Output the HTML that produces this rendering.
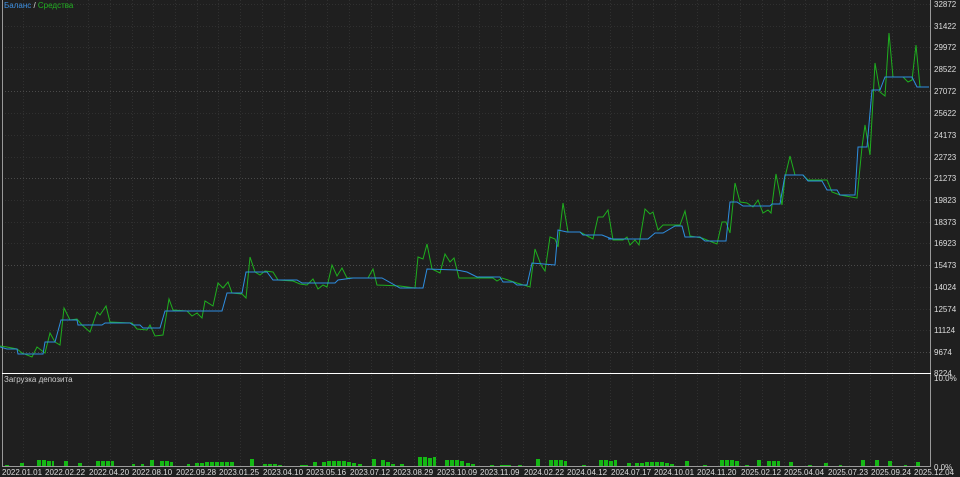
<!DOCTYPE html>
<html><head><meta charset="utf-8"><style>
html,body{margin:0;padding:0;background:#1f1f1f;}
svg{display:block}
text{font-family:"Liberation Sans",sans-serif;font-size:8px;}
</style></head><body>
<svg width="960" height="477" viewBox="0 0 960 477" xmlns="http://www.w3.org/2000/svg">
<rect width="960" height="477" fill="#1f1f1f"/>
<g stroke="#303030" stroke-width="1" stroke-dasharray="1,2">
<path d="M23.5 0V466M67.5 0V466M88.5 0V466M110.5 0V466M132.5 0V466M153.5 0V466M175.5 0V466M197.5 0V466M218.5 0V466M240.5 0V466M262.5 0V466M284.5 0V466M305.5 0V466M327.5 0V466M349.5 0V466M371.5 0V466M392.5 0V466M414.5 0V466M436.5 0V466M458.5 0V466M479.5 0V466M501.5 0V466M523.5 0V466M545.5 0V466M566.5 0V466M588.5 0V466M610.5 0V466M632.5 0V466M653.5 0V466M675.5 0V466M697.5 0V466M718.5 0V466M740.5 0V466M762.5 0V466M784.5 0V466M805.5 0V466M827.5 0V466M849.5 0V466M870.5 0V466M892.5 0V466M914.5 0V466"/>
<path d="M2 4.5H930M2 26.5H930M2 47.5H930M2 69.5H930M2 91.5H930M2 113.5H930M2 135.5H930M2 157.5H930M2 178.5H930M2 200.5H930M2 222.5H930M2 243.5H930M2 265.5H930M2 287.5H930M2 309.5H930M2 330.5H930M2 352.5H930"/>
</g>
<g stroke="#4a4a4a" stroke-width="1" stroke-dasharray="1,2">
<path d="M2 91.5H930M2 178.5H930M2 265.5H930M2 352.5H930"/>
</g>
<line x1="2.5" y1="0" x2="2.5" y2="466" stroke="#999"/>
<line x1="930.5" y1="0" x2="930.5" y2="466" stroke="#999"/>
<line x1="2" y1="466.5" x2="931" y2="466.5" stroke="#999"/>
<line x1="2" y1="373.5" x2="931" y2="373.5" stroke="#fff"/>
<polyline fill="none" stroke="#1fae1f" stroke-width="1" points="0,346 7,347 17,349 22,353 32,357 37,347 45,353 50,333 55,342 60,345 64,308 70,320 77,319 82,325 90,332 97,312 100,315 106,306 110,322 132,323 137,329 147,330 150,325 155,336 163,335 169,299 173,310 187,311 192,316 197,313 202,318 205,301 213,306 218,283 223,288 228,282 232,293 242,294 246,298 250,257 255,272 260,275 265,271 273,272 278,280 293,281 300,284 307,285 313,279 318,289 323,285 327,287 332,265 337,276 342,268 347,278 368,278 373,269 377,285 400,286 415,288 418,257 423,259 427,244 432,269 440,273 445,254 450,262 454,258 459,278 493,278 497,281 502,278 517,283 530,287 535,249 541,265 545,271 550,237 555,239 558,247 563,203 568,232 580,232 593,239 598,217 603,217 608,210 613,240 623,240 627,237 630,245 635,240 639,245 645,209 650,214 653,212 658,230 663,225 680,225 685,211 690,236 702,238 712,242 717,244 722,222 726,222 730,233 735,183 740,202 747,203 753,207 758,200 763,213 768,210 771,213 776,174 782,205 785,177 790,156 795,175 803,175 808,180 827,180 832,192 840,195 857,198 862,147 865,125 870,155 875,63 880,92 885,96 889,33 893,77 903,77 908,82 912,80 916,45 920,87 929,87"/>
<polyline fill="none" stroke="#2e8ee0" stroke-width="1" points="0,347 7,349 17,349 18,354 43,354 45,342 55,342 61,320 77,320 78,325 102,325 105,323 130,323 133,325 140,325 143,328 160,328 165,311 222,311 227,293 242,293 246,272 267,272 273,280 297,280 302,283 335,283 338,280 353,278 382,278 400,288 423,288 427,269 457,270 467,272 477,277 500,277 503,282 513,282 517,285 527,285 532,263 555,265 558,230 567,232 580,232 583,235 602,235 612,239 608,239 648,239 655,233 663,233 675,226 682,226 685,237 700,237 705,241 726,241 730,202 737,202 743,206 770,206 772,204 780,204 785,175 803,175 808,181 822,181 827,190 837,190 840,195 855,195 858,147 867,147 872,90 880,90 885,77 912,77 917,87 929,87"/>
<g fill="#14b814">
<rect x="5" y="465" width="4" height="1"/><rect x="20" y="463" width="4" height="3"/>
<rect x="37" y="460" width="4" height="6"/><rect x="42" y="460" width="4" height="6"/><rect x="47" y="461" width="4" height="5"/><rect x="52" y="461" width="2" height="5"/>
<rect x="64" y="461" width="4" height="5"/><rect x="78" y="463" width="4" height="3"/>
<rect x="96" y="461" width="4" height="5"/><rect x="101" y="461" width="4" height="5"/><rect x="106" y="461" width="4" height="5"/><rect x="111" y="461" width="3" height="5"/>
<rect x="132" y="464" width="3" height="2"/><rect x="141" y="464" width="3" height="2"/>
<rect x="150" y="460" width="4" height="6"/><rect x="160" y="461" width="4" height="5"/><rect x="165" y="461" width="4" height="5"/><rect x="170" y="462" width="3" height="4"/>
<rect x="187" y="464" width="3" height="2"/><rect x="195" y="463" width="4" height="3"/><rect x="200" y="463" width="4" height="3"/><rect x="205" y="462" width="4" height="4"/><rect x="210" y="462" width="4" height="4"/><rect x="215" y="462" width="4" height="4"/><rect x="220" y="462" width="4" height="4"/><rect x="225" y="462" width="4" height="4"/><rect x="230" y="462" width="4" height="4"/>
<rect x="250" y="459" width="4" height="7"/><rect x="263" y="464" width="4" height="2"/><rect x="268" y="464" width="4" height="2"/><rect x="273" y="464" width="4" height="2"/><rect x="278" y="465" width="4" height="1"/>
<rect x="300" y="465" width="8" height="1"/><rect x="313" y="462" width="4" height="4"/><rect x="322" y="462" width="4" height="4"/><rect x="327" y="461" width="4" height="5"/><rect x="332" y="461" width="4" height="5"/><rect x="337" y="461" width="4" height="5"/><rect x="342" y="461" width="4" height="5"/><rect x="347" y="462" width="4" height="4"/><rect x="352" y="463" width="4" height="3"/><rect x="358" y="464" width="4" height="2"/>
<rect x="372" y="459" width="4" height="7"/><rect x="381" y="460" width="4" height="6"/><rect x="386" y="462" width="4" height="4"/><rect x="391" y="464" width="4" height="2"/><rect x="400" y="464" width="4" height="2"/>
<rect x="418" y="457" width="4" height="9"/><rect x="423" y="457" width="4" height="9"/><rect x="428" y="458" width="4" height="8"/><rect x="433" y="457" width="3" height="9"/>
<rect x="445" y="460" width="4" height="6"/><rect x="450" y="460" width="4" height="6"/><rect x="455" y="460" width="4" height="6"/><rect x="460" y="461" width="4" height="5"/><rect x="466" y="463" width="4" height="3"/><rect x="471" y="464" width="4" height="2"/>
<rect x="490" y="465" width="4" height="1"/><rect x="500" y="465" width="11" height="1"/><rect x="518" y="465" width="4" height="1"/>
<rect x="536" y="459" width="4" height="7"/><rect x="549" y="460" width="4" height="6"/><rect x="554" y="460" width="4" height="6"/><rect x="559" y="460" width="4" height="6"/><rect x="564" y="461" width="3" height="5"/><rect x="582" y="465" width="4" height="1"/>
<rect x="599" y="460" width="4" height="6"/><rect x="604" y="460" width="4" height="6"/><rect x="609" y="461" width="4" height="5"/><rect x="614" y="460" width="3" height="6"/>
<rect x="627" y="463" width="4" height="3"/><rect x="635" y="463" width="4" height="3"/><rect x="640" y="463" width="4" height="3"/><rect x="645" y="462" width="4" height="4"/><rect x="650" y="462" width="4" height="4"/><rect x="655" y="462" width="4" height="4"/><rect x="660" y="462" width="4" height="4"/><rect x="665" y="463" width="4" height="3"/><rect x="670" y="464" width="4" height="2"/>
<rect x="685" y="461" width="4" height="5"/><rect x="703" y="465" width="4" height="1"/>
<rect x="720" y="460" width="4" height="6"/><rect x="725" y="460" width="4" height="6"/><rect x="730" y="460" width="4" height="6"/><rect x="735" y="461" width="4" height="5"/><rect x="745" y="465" width="4" height="1"/>
<rect x="757" y="460" width="4" height="6"/><rect x="767" y="461" width="4" height="5"/><rect x="772" y="461" width="4" height="5"/><rect x="777" y="461" width="3" height="5"/><rect x="789" y="462" width="4" height="4"/>
<rect x="808" y="465" width="4" height="1"/><rect x="824" y="463" width="4" height="3"/><rect x="839" y="465" width="3" height="1"/>
<rect x="861" y="460" width="4" height="6"/><rect x="875" y="460" width="4" height="6"/><rect x="888" y="461" width="4" height="5"/><rect x="904" y="465" width="3" height="1"/><rect x="916" y="462" width="4" height="4"/>
</g>
<text x="4" y="8" font-size="7"><tspan fill="#3d8fe0">Баланс</tspan><tspan fill="#ddd"> / </tspan><tspan fill="#22b022">Средства</tspan></text>
<text x="4" y="382" fill="#ccc" font-size="7">Загрузка депозита</text>
<g fill="#ddd" font-size="7.5">
<text x="934" y="7">32872</text><text x="934" y="29">31422</text><text x="934" y="50">29972</text><text x="934" y="72">28522</text><text x="934" y="94">27072</text><text x="934" y="116">25622</text><text x="934" y="138">24173</text><text x="934" y="160">22723</text><text x="934" y="181">21273</text><text x="934" y="203">19823</text><text x="934" y="225">18373</text><text x="934" y="246">16923</text><text x="934" y="268">15473</text><text x="934" y="290">14024</text><text x="934" y="312">12574</text><text x="934" y="333">11124</text><text x="934" y="355">9674</text><text x="934" y="376">8224</text>
<text x="934" y="381">10.0%</text><text x="934" y="470">0.0%</text>
</g>
<g fill="#ddd" font-size="7.5">
<text x="2" y="475">2022.01.01</text><text x="45" y="475">2022.02.22</text><text x="89" y="475">2022.04.20</text><text x="132" y="475">2022.08.10</text><text x="176" y="475">2022.09.28</text><text x="219" y="475">2023.01.25</text><text x="263" y="475">2023.04.10</text><text x="306" y="475">2023.05.16</text><text x="350" y="475">2023.07.12</text><text x="393" y="475">2023.08.29</text><text x="437" y="475">2023.10.09</text><text x="480" y="475">2023.11.09</text><text x="524" y="475">2024.02.22</text><text x="567" y="475">2024.04.12</text><text x="611" y="475">2024.07.17</text><text x="654" y="475">2024.10.01</text><text x="697" y="475">2024.11.20</text><text x="741" y="475">2025.02.12</text><text x="784" y="475">2025.04.04</text><text x="828" y="475">2025.07.23</text><text x="871" y="475">2025.09.24</text><text x="914" y="475">2025.12.04</text>
</g>
</svg>
</body></html>
